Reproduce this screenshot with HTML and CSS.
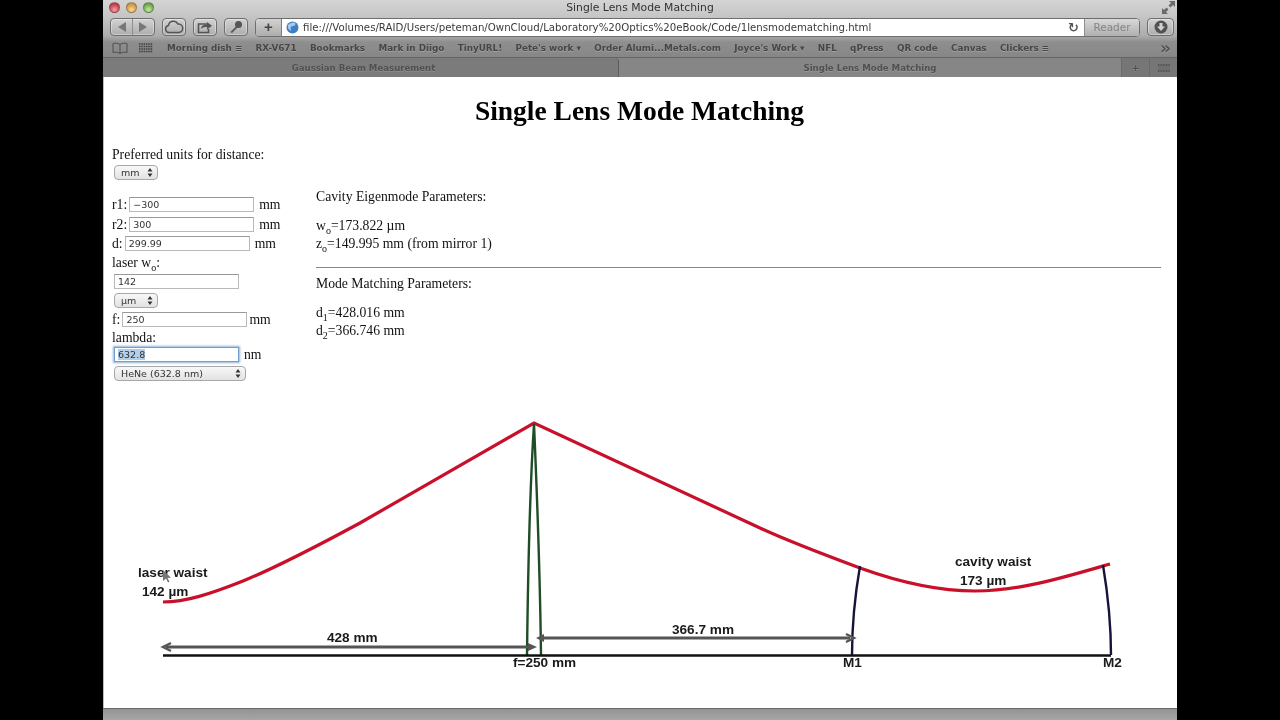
FILE: index.html
```html
<!DOCTYPE html>
<html lang="en">
<head>
<meta charset="utf-8">
<title>Single Lens Mode Matching</title>
<link rel="stylesheet" href="styles.css">
</head>
<body>
<div class="window">
  <div class="chrome">
    <div class="titlebar">
      <div class="lights"><span class="light red"></span><span class="light amber"></span><span class="light green"></span></div>
      <div class="wintitle">Single Lens Mode Matching</div>
      <svg class="fullscreen" width="13" height="13" viewBox="0 0 13 13"><path d="M7 0h6v6l-2-2-2.500 2.500-2-2L9 2zM0 7v6h6l-2-2 2.500-2.500-2-2L2 9z" fill="#6a6a6a"/></svg>
    </div>
    <div class="toolbar">
      <div class="btn nav">
        <svg width="20" height="12" viewBox="0 0 20 12"><path d="M14 1v10L6 6z" fill="#777"/></svg>
        <span class="sep"></span>
        <svg width="20" height="12" viewBox="0 0 20 12"><path d="M6 1v10l8-5z" fill="#777"/></svg>
      </div>
      <div class="btn icon">
        <svg width="20" height="14" viewBox="0 0 20 14"><path d="M5 12.500a3.600 3.600 0 0 1-.6-7.100A5 5 0 0 1 13.800 4a4.200 4.200 0 0 1 1.200 8.500z" fill="none" stroke="#555" stroke-width="1.500"/></svg>
      </div>
      <div class="btn icon">
        <svg width="18" height="14" viewBox="0 0 18 14"><path d="M12 4H2.500v8.500h10V9" fill="none" stroke="#555" stroke-width="1.600"/><path d="M5 9c0-3 2-4.500 6-4.500V2l5 3.800-5 3.700V7C8 7 6 7.500 5 9z" fill="#555"/></svg>
      </div>
      <div class="btn icon">
        <svg width="16" height="14" viewBox="0 0 16 14"><circle cx="10.500" cy="4.500" r="3.500" fill="#555"/><path d="M8.500 6 2.500 12l1.500 1 6-6z" fill="#555"/></svg>
      </div>
      <div class="address">
        <span class="plus">+</span>
        <div class="urlfield">
          <svg class="globe" width="13" height="13" viewBox="0 0 13 13"><circle cx="6.500" cy="6.500" r="6" fill="#3f7fc4"/><path d="M2 4c2-2 5-3 7-2 1 1 0 3-2 3S4 7 5 9 3 9 2 7z" fill="#a9c9e8"/></svg>
          <span class="url">file:///Volumes/RAID/Users/peteman/OwnCloud/Laboratory%20Optics%20eBook/Code/1lensmodematching.html</span>
          <span class="reload">&#8635;</span>
        </div>
        <span class="reader">Reader</span>
      </div>
      <div class="btn download">
        <svg width="14" height="14" viewBox="0 0 14 14"><circle cx="7" cy="7" r="6.500" fill="#505050"/><path d="M5.500 3h3v3.500H11L7 11 3 6.500h2.500z" fill="#cfcfcf"/></svg>
      </div>
    </div>
    <div class="bookmarks">
      <svg class="book" width="16" height="12" viewBox="0 0 16 12"><path d="M8 2.500C6 1 3 1 1 1.500v9c2-.5 5-.5 7 1 2-1.500 5-1.500 7-1v-9C13 1 10 1 8 2.500zM8 2.500v9" fill="none" stroke="#4c4c4c"/></svg>
      <svg class="grid" width="14" height="10" viewBox="0 0 14 10"><path d="M0 1h14M0 3.500h14M0 6h14M0 8.500h14" stroke="#3e3e3e" stroke-width="1.300" stroke-dasharray="1.500 .8"/></svg>
      <span class="mark">Morning dish &#8801;</span>
      <span class="mark">RX-V671</span>
      <span class="mark">Bookmarks</span>
      <span class="mark">Mark in Diigo</span>
      <span class="mark">TinyURL!</span>
      <span class="mark">Pete's work &#9662;</span>
      <span class="mark">Order Alumi...Metals.com</span>
      <span class="mark">Joyce's Work &#9662;</span>
      <span class="mark">NFL</span>
      <span class="mark">qPress</span>
      <span class="mark">QR code</span>
      <span class="mark">Canvas</span>
      <span class="mark">Clickers &#8801;</span>
      <span class="more">&#187;</span>
    </div>
    <div class="tabs">
      <div class="tab back">Gaussian Beam Measurement</div>
      <div class="tab front">Single Lens Mode Matching</div>
      <div class="tabtools">
        <span class="tool">+</span>
        <span class="tool"><svg width="14" height="8" viewBox="0 0 14 8"><path d="M1 1h12M1 7h12" stroke="#4a4a4a" stroke-width="1.500" stroke-dasharray="1 .6"/><rect x="1" y="2" width="12" height="4" fill="#6f6f6f"/></svg></span>
      </div>
    </div>
  </div>

  <main class="page">
    <h1>Single Lens Mode Matching</h1>
    <div class="columns">
      <form class="inputs">
        <div class="units-label">Preferred units for distance:</div>
        <div class="select-row"><span class="select s-mm">mm<svg width="6" height="9" viewBox="0 0 6 9"><path d="M3 0l2.500 3.500h-5zM3 9 .5 5.500h5z" fill="#333"/></svg></span></div>
        <div class="row r-r1"><span>r1:</span><input class="field" value="&#8722;300"><span class="unit">mm</span></div>
        <div class="row r-r2"><span>r2:</span><input class="field" value="300"><span class="unit">mm</span></div>
        <div class="row r-d"><span>d:</span><input class="field" value="299.99"><span class="unit">mm</span></div>
        <div class="row r-label"><span>laser w<sub>o</sub>:</span></div>
        <div class="row r-laser"><input class="field" value="142"></div>
        <div class="select-row"><span class="select s-mm">&#181;m<svg width="6" height="9" viewBox="0 0 6 9"><path d="M3 0l2.500 3.500h-5zM3 9 .5 5.500h5z" fill="#333"/></svg></span></div>
        <div class="row r-f"><span>f:</span><input class="field" value="250"><span class="unit">mm</span></div>
        <div class="row r-lambda">lambda:</div>
        <div class="row r-nm"><span class="field focus"><span class="selected">632.8</span></span><span class="unit">nm</span></div>
        <div class="select-row"><span class="select s-hene">HeNe (632.8 nm)<svg width="6" height="9" viewBox="0 0 6 9"><path d="M3 0l2.500 3.500h-5zM3 9 .5 5.500h5z" fill="#333"/></svg></span></div>
      </form>
      <section class="results">
        <p class="head">Cavity Eigenmode Parameters:</p>
        <p class="vals">w<sub>o</sub>=173.822 &#181;m<br>z<sub>o</sub>=149.995 mm (from mirror 1)</p>
        <hr>
        <p class="head">Mode Matching Parameters:</p>
        <p class="vals">d<sub>1</sub>=428.016 mm<br>d<sub>2</sub>=366.746 mm</p>
      </section>
    </div>
    <svg class="diagram" width="1074" height="320" viewBox="103 390 1074 320">
      <path d="M163 602 C 186 602 210 594 243 581 C 275 568 310 550 360 523 L 534 423 L 760 528 C 790 542 825 555 860 568 C 885 577 930 591 975 591 C 1020 591 1065 577 1110 564" fill="none" stroke="#c8102a" stroke-width="3.200"/>
      <path d="M527 655 C 528 570 531 470 534 424 C 536 470 540 570 541 655" fill="none" stroke="#1f4d26" stroke-width="2.400"/>
      <path d="M852 655 C 852 625 855 595 860 566" fill="none" stroke="#14143c" stroke-width="2.400"/>
      <path d="M1111 655 C 1111 625 1108 595 1103 565" fill="none" stroke="#14143c" stroke-width="2.400"/>
      <path d="M163 655.500H1111" stroke="#111" stroke-width="2.600"/>
      <path d="M166 647H532" stroke="#555" stroke-width="3"/>
      <path d="M171 643l-8 4 8 4" fill="none" stroke="#555" stroke-width="2.400"/>
      <path d="M528 643l9 4-9 4z" fill="#555"/>
      <path d="M541 638H850" stroke="#555" stroke-width="3"/>
      <path d="M544 634l-8 4 8 4z" fill="#555"/>
      <path d="M846 634l8 4-8 4" fill="none" stroke="#555" stroke-width="2.400"/>
      <g class="dlabels">
        <text x="138" y="577">laser waist</text>
        <text x="142" y="596">142 &#181;m</text>
        <text x="327" y="642">428 mm</text>
        <text x="513" y="667">f=250 mm</text>
        <text x="672" y="634">366.7 mm</text>
        <text x="843" y="667">M1</text>
        <text x="1103" y="667">M2</text>
        <text x="955" y="566">cavity waist</text>
        <text x="960" y="585">173 &#181;m</text>
      </g>
      <path d="M163 570v11l3-2.500 2 4 1.500-.8-2-3.800 3.500-.2z" fill="#777"/>
    </svg>
  </main>
  <div class="statusbar"></div>
</div>
</body>
</html>
```
FILE: styles.css
```css
* { box-sizing: border-box; }
html, body { margin: 0; height: 100%; background: #000; overflow: hidden; }
body { display: flex; justify-content: center; }
.window { width: 1074px; height: 720px; display: flex; flex-direction: column; background: #fff; position: relative; overflow: hidden; filter: blur(.4px); }

.chrome { height: 77px; flex: none; background: linear-gradient(#d4d4d4 0, #c6c6c6 16px, #acacac 36px, #8e8e8e 42px, #878787 57px); }
.titlebar { height: 16px; display: flex; align-items: center; position: relative; padding: 0 2px 2px 6px; }
.lights { display: flex; gap: 6px; }
.light { width: 11px; height: 11px; border-radius: 50%; border: 1px solid rgba(80,80,80,.45); }
.red { background: radial-gradient(circle at 50% 75%, #f0a0a8, #c23a48 70%); }
.amber { background: radial-gradient(circle at 50% 75%, #f6dc9b, #cf9437 70%); }
.green { background: radial-gradient(circle at 50% 75%, #c9e8a6, #69a545 70%); }
.wintitle { position: absolute; left: 0; right: 0; text-align: center; font: 10.800px "DejaVu Sans", sans-serif; color: #333; }
.fullscreen { margin-left: auto; }

.toolbar { height: 22px; display: flex; align-items: center; padding: 0 3px 0 7px; gap: 7px; }
.btn { height: 18px; border: 1px solid #6e6e6e; border-radius: 4px; background: linear-gradient(#d2d2d2, #adadad); box-shadow: inset 0 0 0 1px rgba(255,255,255,.35); display: flex; align-items: center; justify-content: center; }
.nav { width: 45px; }
.nav .sep { width: 1px; height: 16px; background: #8e8e8e; }
.icon { width: 24px; }
.address { flex: 1; display: flex; height: 19px; border: 1px solid #6e6e6e; border-radius: 4px; overflow: hidden; background: #fff; }
.plus { width: 26px; background: linear-gradient(#d2d2d2, #adadad); border-right: 1px solid #7e7e7e; text-align: center; font: bold 15px/16px "Liberation Sans", sans-serif; color: #444; }
.urlfield { flex: 1; display: flex; align-items: center; padding-left: 4px; gap: 4px; min-width: 0; }
.url { flex: 1; font: 10.200px "DejaVu Sans", sans-serif; color: #3a3a3a; white-space: nowrap; overflow: hidden; }
.reload { font: bold 13px "DejaVu Sans", sans-serif; color: #555; padding-right: 5px; }
.reader { width: 55px; background: linear-gradient(#d8d8d8, #b0b0b0); border-left: 1px solid #8e8e8e; text-align: center; font: 10.500px/17px "DejaVu Sans", sans-serif; color: #858585; }
.download { width: 27px; }

.bookmarks { height: 19px; display: flex; align-items: center; padding: 0 6px 0 9px; font: bold 8.800px "DejaVu Sans", sans-serif; color: #464646; white-space: nowrap; text-shadow: 0 1px 0 rgba(255,255,255,.2); }
.grid { margin-left: 11px; margin-right: 14px; }
.mark { margin-right: 13.300px; }
.more { margin-left: auto; font-size: 17px; line-height: 12px; color: #505050; }

.tabs { height: 20px; display: flex; font: bold 8.600px "DejaVu Sans", sans-serif; color: #505050; border-top: 1px solid #646464; text-shadow: 0 1px 0 rgba(255,255,255,.15); }
.tab { display: flex; align-items: center; justify-content: center; }
.back { width: 516px; padding-left: 6px; background: #7b7b7b; border-right: 1px solid #5c5c5c; border-top-right-radius: 4px; }
.front { flex: 1; background: #868686; }
.tabtools { display: flex; }
.tool { width: 28px; display: flex; align-items: center; justify-content: center; border-left: 1px solid #6a6a6a; background: #767676; }

.page { flex: 1; min-height: 0; display: flex; flex-direction: column; font: 13.700px/18px "Liberation Serif", serif; color: #111; border-left: 1px solid #bdbdbd; }
h1 { margin: 18px 0 0; height: 44px; padding-right: 2px; text-align: center; font: bold 27.500px/32px "Liberation Serif", serif; color: #000; }
.columns { display: flex; padding: 0 16px 0 8px; margin-top: -11px; height: 248px; flex: none; }
.inputs { width: 204px; flex: none; }
.units-label { margin-top: 17px; height: 18px; line-height: 19px; }
.select-row { height: 19px; padding-left: 2px; display: flex; align-items: center; }
.select { display: inline-flex; align-items: center; justify-content: space-between; height: 15px; border: 1px solid #a8a8a8; border-radius: 4px; background: linear-gradient(#f8f8f8, #e2e2e2); font: 9.500px "DejaVu Sans", sans-serif; color: #333; padding: 0 4px 0 6px; }
.s-mm { width: 44px; }
.s-hene { width: 132px; }
.row { height: 19px; display: flex; align-items: center; gap: 2px; white-space: nowrap; }
.r-r1 { margin-top: 13px; }
.r-r2 { margin-top: 1px; }
.r-lambda { margin-top: -1px; }
.r-nm { margin-top: -2px; }
.field { width: 125px; height: 15px; border: 1px solid #b9b9b9; border-top-color: #999; padding: 0 3px; font: 9.500px "DejaVu Sans", sans-serif; color: #333; background: #fff; border-radius: 0; outline: none; display: inline-flex; align-items: center; }
.row .unit { margin-left: 3px; }
.r-f .unit { margin-left: 0; }
.r-laser, .r-nm { padding-left: 2px; }
.focus { border-color: #6f9fd0; box-shadow: 0 0 2px 1px #8db4dc; }
.selected { background: #b3cfe8; }
sub { font-size: 10px; line-height: 0; }
.results { flex: 1; padding-top: 60px; }
.results p { margin: 0; }
.results .vals { margin-top: 11px; }
.results hr { margin: 14px 0 7px; border: none; border-top: 1px solid #888; height: 1px; }
.diagram { display: block; position: absolute; left: 0; top: 390px; }
.dlabels text { font: bold 13.600px "Liberation Sans", sans-serif; fill: #1a1a1a; }
.statusbar { height: 12px; flex: none; background: linear-gradient(#939393, #a6a6a6); border-top: 1px solid #6a6a6a; }
```
